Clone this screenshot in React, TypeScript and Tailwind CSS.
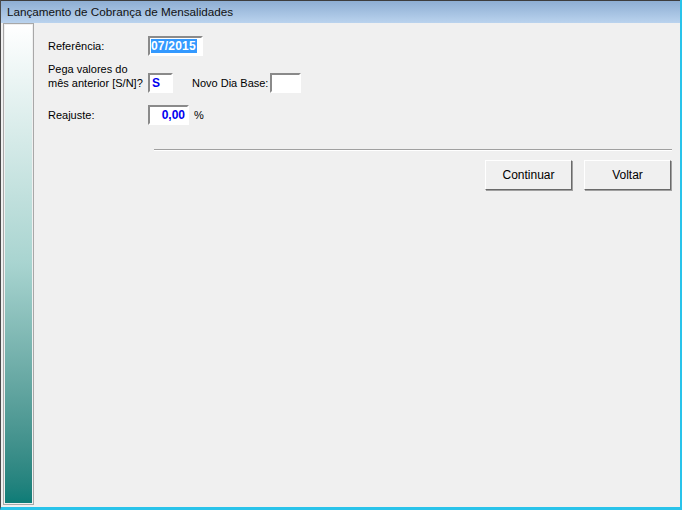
import React from "react";

const sunken =
  "border-2 border-t-[#8a8a8a] border-l-[#8a8a8a] border-b-white border-r-white bg-white";

const Button = ({ label }: { label: string }) => (
  <button
    type="button"
    className="w-[87px] h-[30px] border border-t-white border-l-white border-b-[#6a6a6a] border-r-[#6a6a6a] bg-[#f0f0f0] shadow-[1px_1px_0_#a0a0a0] text-[12px] text-black"
  >
    {label}
  </button>
);

export default function App() {
  return (
    <div
      className="w-[682px] h-[510px] flex flex-col bg-[#f0f0f0] border-l border-l-[#4a4a4a] border-r-2 border-r-[#29c3ea] border-b-[3px] border-b-[#29c3ea] overflow-hidden"
      style={{ fontFamily: '"Liberation Sans", Arial, sans-serif' }}
    >
      {/* title bar */}
      <div className="h-[23px] shrink-0 flex items-center pl-[6px] bg-gradient-to-b from-[#8eaed3] to-[#bad3ee] border-t border-t-[#3d3d3d] text-[11.7px] text-[#111]">
        Lançamento de Cobrança de Mensalidades
      </div>

      <div className="flex flex-1 min-h-0 pl-[2px] pb-[2px]">
        {/* side strip */}
        <div className="w-[31px] shrink-0 border border-[#a8a8a8] p-px">
          <div className="h-full bg-gradient-to-b from-white via-[#a8d4d0] to-[#0b7c77]" />
        </div>

        {/* form */}
        <div className="flex-1 pl-[14px] pt-[13px] text-[11px] text-black">
          <div className="flex items-center h-[20px]">
            <span className="w-[100px]">Referência:</span>
            <div className={`${sunken} w-[55px] h-[20px] flex items-center pl-px`}>
              <span className="bg-[#3399ff] text-white font-bold text-[12px] leading-[14px] pr-px tracking-[0.2px]">
                07/2015
              </span>
            </div>
          </div>

          <div className="flex items-start mt-[6px]">
            <div className="w-[100px] leading-[14px]">
              <div>Pega valores do</div>
              <div>mês anterior [S/N]?</div>
            </div>
            <div className={`${sunken} w-[25px] h-[20px] flex items-center pl-[2px] mt-[11px]`}>
              <span className="text-[#0000ee] font-bold text-[12px]">S</span>
            </div>
            <span className="ml-[19px] mt-[14px] leading-[14px]">Novo Dia Base:</span>
            <div className={`${sunken} w-[31px] h-[20px] ml-[2px] mt-[11px]`} />
          </div>

          <div className="flex items-center mt-[12px] h-[20px]">
            <span className="w-[100px]">Reajuste:</span>
            <div className={`${sunken} w-[41px] h-[20px] flex items-center justify-end pr-[2px]`}>
              <span className="text-[#0000ee] font-bold text-[12px]">0,00</span>
            </div>
            <span className="ml-[5px]">%</span>
          </div>

          <div className="ml-[106px] mr-[8px] mt-[24px] border-t border-t-[#a0a0a0] border-b border-b-white" />

          <div className="flex justify-end gap-[12px] mr-[9px] mt-[9px]">
            <Button label="Continuar" />
            <Button label="Voltar" />
          </div>
        </div>
      </div>
    </div>
  );
}
